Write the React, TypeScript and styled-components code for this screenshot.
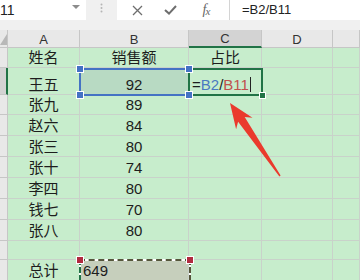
import React from 'react';
import styled, { createGlobalStyle } from 'styled-components';

const LINE = '#c9d2ca';
const HEAD_LINE = '#c6c6c6';
const SHEET_GREEN = '#c7edcc';
const EXCEL_GREEN = '#217346';

const GlobalStyle = createGlobalStyle`
  html, body {
    margin: 0;
    padding: 0;
    background: #fff;
    overflow: hidden;
  }
  body {
    font-family: "Liberation Sans", "Noto Sans CJK SC", sans-serif;
  }
`;

const Window = styled.div`
  width: 360px;
  height: 280px;
  overflow: hidden;
  display: flex;
  flex-direction: column;
  background: #f0f0f0;
`;

const FormulaBar = styled.div`
  display: flex;
  align-items: flex-start;
  height: 30px;
  flex-shrink: 0;
  background: #f0f0f0;
`;

const NameBox = styled.div`
  width: 86px;
  height: 20px;
  box-sizing: border-box;
  padding: 0 6px 0 0;
  display: flex;
  justify-content: space-between;
  align-items: flex-start;
  background: #fff;
  font-size: 14px;
  line-height: 20px;
  color: #222;
`;

const Caret = styled.span`
  width: 0;
  height: 0;
  margin-top: 5px;
  border-left: 4px solid transparent;
  border-right: 4px solid transparent;
  border-top: 4px solid #8c8c8c;
`;

const Grip = styled.div`
  width: 31px;
  display: flex;
  justify-content: center;
  padding-top: 3px;
`;

const Actions = styled.div`
  width: 112px;
  height: 20px;
  display: grid;
  grid-template-columns: 40px 26px 46px;
  align-items: center;
  justify-items: center;
  background: #fff;
`;

const Fx = styled.span`
  font-family: "Liberation Serif", serif;
  font-style: italic;
  font-size: 14px;
  color: #666;
  letter-spacing: -1px;
  sub {
    font-size: 11px;
    vertical-align: -1px;
  }
`;

const FormulaInput = styled.div`
  flex: 1;
  height: 20px;
  box-sizing: border-box;
  padding-left: 12px;
  border-left: 1px solid #d4d4d4;
  background: #fff;
  font-size: 13px;
  line-height: 20px;
  color: #222;
`;

const Sheet = styled.div`
  position: relative;
  flex: 1;
  display: grid;
  grid-template-columns: 8px 72px 109px 73px 71px 1fr;
  grid-template-rows: 18px 20px 27px 20px repeat(6, 21px) 19px 21px;
  background: ${SHEET_GREEN};
`;

const Corner = styled.div`
  position: relative;
  background: #e8e8e8;
  border-right: 1px solid ${HEAD_LINE};
  border-bottom: 1px solid ${HEAD_LINE};
  &::after {
    content: '';
    position: absolute;
    left: 0;
    bottom: 2px;
    width: 7px;
    height: 11px;
    background: #b8b8b8;
    clip-path: polygon(100% 0, 100% 100%, 0 100%);
  }
`;

const ColHead = styled.div<{ $active?: boolean }>`
  display: flex;
  align-items: center;
  justify-content: center;
  box-sizing: border-box;
  background: ${({ $active }) => ($active ? '#d3d3d3' : '#e8e8e8')};
  border-right: 1px solid ${HEAD_LINE};
  border-bottom: ${({ $active }) => ($active ? `2px solid ${EXCEL_GREEN}` : `1px solid ${HEAD_LINE}`)};
  font-size: 13px;
  color: #333;
  padding-top: 1px;
`;

const RowHead = styled.div<{ $active?: boolean }>`
  box-sizing: border-box;
  background: ${({ $active }) => ($active ? '#d3d3d3' : '#e8e8e8')};
  border-bottom: 1px solid ${HEAD_LINE};
  border-right: ${({ $active }) => ($active ? `2px solid ${EXCEL_GREEN}` : `1px solid ${HEAD_LINE}`)};
`;

const Cell = styled.div<{ $align?: 'left' | 'center'; $tone?: 'sel' | 'ref' }>`
  display: flex;
  align-items: flex-end;
  justify-content: ${({ $align }) => ($align === 'left' ? 'flex-start' : 'center')};
  box-sizing: border-box;
  padding: 0 3px 1px;
  overflow: hidden;
  white-space: nowrap;
  border-right: 1px solid ${LINE};
  border-bottom: 1px solid ${LINE};
  background: ${({ $tone }) =>
    $tone === 'sel' ? '#b8dac3' : $tone === 'ref' ? '#c6cfbc' : 'transparent'};
  font-size: 15px;
  line-height: 17px;
  color: #1d1d1d;
`;

const RefPart = styled.span<{ $color: string }>`
  color: ${({ $color }) => $color};
`;

const Cursor = styled.span`
  width: 1px;
  height: 15px;
  margin: 0 0 1px 1px;
  background: #222;
`;

const Box = styled.div<{ $color: string }>`
  position: absolute;
  box-sizing: border-box;
  border: 2px solid ${({ $color }) => $color};
  pointer-events: none;
`;

const Handle = styled.div<{ $color: string; $size?: number }>`
  position: absolute;
  width: ${({ $size }) => $size ?? 6}px;
  height: ${({ $size }) => $size ?? 6}px;
  margin: ${({ $size }) => -((($size ?? 6) + 2) / 2)}px 0 0 ${({ $size }) => -((($size ?? 6) + 2) / 2)}px;
  background: ${({ $color }) => $color};
  border: 1px solid #fff;
`;

const MarchBox = styled.div`
  position: absolute;
  box-sizing: border-box;
  border: 2px solid #fff;
  &::after {
    content: '';
    position: absolute;
    inset: -2px;
    border: 2px dashed #55553a;
    border-left-color: ${EXCEL_GREEN};
  }
`;

const Overlay = styled.svg`
  position: absolute;
  left: 0;
  top: 0;
  pointer-events: none;
`;

const rows: [string, string][] = [
  ['姓名', '销售额'],
  ['王五', '92'],
  ['张九', '89'],
  ['赵六', '84'],
  ['张三', '80'],
  ['张十', '74'],
  ['李四', '80'],
  ['钱七', '70'],
  ['张八', '80'],
  ['', ''],
  ['总计', '649'],
];

const App: React.FC = () => {
  return (
    <>
      <GlobalStyle />
      <Window>
        <FormulaBar>
          <NameBox>
            <span>11</span>
            <Caret />
          </NameBox>
          <Grip>
            <svg width="3" height="10" viewBox="0 0 3 10">
              <circle cx="1.5" cy="1.5" r="1" fill="#b5b5b5" />
              <circle cx="1.5" cy="5" r="1" fill="#b5b5b5" />
              <circle cx="1.5" cy="8.5" r="1" fill="#b5b5b5" />
            </svg>
          </Grip>
          <Actions>
            <svg width="11" height="11" viewBox="0 0 11 11">
              <path d="M1 1 L10 10 M10 1 L1 10" stroke="#6e6e6e" strokeWidth="1.3" />
            </svg>
            <svg width="13" height="10" viewBox="0 0 13 10">
              <path d="M1 5 L5 8.6 L12 1" stroke="#6e6e6e" strokeWidth="2" fill="none" />
            </svg>
            <Fx>
              f<sub>x</sub>
            </Fx>
          </Actions>
          <FormulaInput>=B2/B11</FormulaInput>
        </FormulaBar>

        <Sheet>
          <Corner />
          <ColHead>A</ColHead>
          <ColHead>B</ColHead>
          <ColHead $active>C</ColHead>
          <ColHead>D</ColHead>
          <ColHead />

          {rows.map(([name, amount], i) => {
            const r = i + 1;
            return (
              <React.Fragment key={r}>
                <RowHead $active={r === 2} />
                <Cell>{name}</Cell>
                <Cell
                  $align={r === 11 ? 'left' : 'center'}
                  $tone={r === 2 ? 'sel' : r === 11 ? 'ref' : undefined}
                >
                  {amount}
                </Cell>
                {r === 1 && <Cell>占比</Cell>}
                {r === 2 && (
                  <Cell $align="left">
                    =<RefPart $color="#4a79c0">B2</RefPart>/<RefPart $color="#c0504d">B11</RefPart>
                    <Cursor />
                  </Cell>
                )}
                {r > 2 && <Cell />}
                <Cell />
                <Cell />
              </React.Fragment>
            );
          })}

          <Box $color="#4472c4" style={{ left: 79, top: 38, width: 111, height: 28 }} />
          <Box $color={EXCEL_GREEN} style={{ left: 188, top: 38, width: 75, height: 28 }} />
          <Handle $color="#4472c4" style={{ left: 80, top: 39 }} />
          <Handle $color="#4472c4" style={{ left: 80, top: 65 }} />
          <Handle $color="#4472c4" style={{ left: 189, top: 39 }} />
          <Handle $color="#4472c4" style={{ left: 189, top: 65 }} />
          <Handle $color={EXCEL_GREEN} $size={5} style={{ left: 262, top: 65 }} />

          <MarchBox style={{ left: 79, top: 229, width: 112, height: 30 }} />
          <Handle $color="#b02a3e" style={{ left: 80, top: 230 }} />
          <Handle $color="#b02a3e" style={{ left: 190, top: 230 }} />

          <Overlay width="360" height="250" viewBox="0 30 360 250">
            <path
              d="M230 103 L252.5 117.8 L244.7 117.1 L280.6 175.6 L279.4 176.4 L238.1 121.7 L236.1 129.2 Z"
              fill="#ea3a2d"
            />
          </Overlay>
        </Sheet>
      </Window>
    </>
  );
};

export default App;
